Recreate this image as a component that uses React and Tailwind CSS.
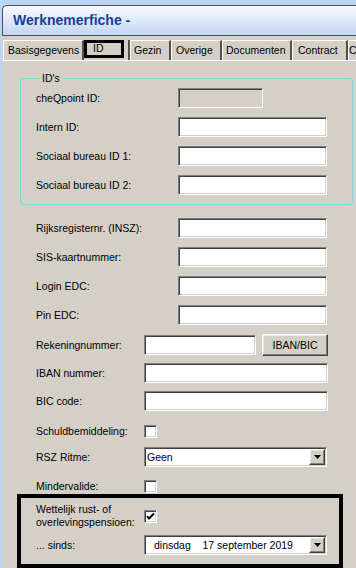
import React from "react";

const sunken =
  "border border-t-[#808080] border-l-[#808080] border-b-white border-r-white shadow-[inset_1px_1px_0_#404040,inset_-1px_-1px_0_#d4d0c8]";
const raised =
  "border border-t-white border-l-white border-b-[#404040] border-r-[#404040] shadow-[inset_-1px_-1px_0_#808080,inset_1px_1px_0_#e8e6e1]";

function Input({ w = "w-[149px]", disabled = false }) {
  return (
    <div className={`h-[20px] ${w} ${sunken} ${disabled ? "bg-[#d4d0c8]" : "bg-white"}`} />
  );
}

function Checkbox({ checked = false }) {
  return (
    <div className={`w-[13px] h-[13px] bg-white ${sunken} flex items-center justify-center`}>
      {checked && (
        <svg width="9" height="9" viewBox="0 0 9 9">
          <path d="M1 4 L3 6.5 L8 1.5" stroke="#000" strokeWidth="2" fill="none" />
        </svg>
      )}
    </div>
  );
}

function DropBtn() {
  return (
    <div className={`w-[16px] h-[16px] bg-[#d4d0c8] ${raised} flex items-center justify-center`}>
      <svg width="7" height="4" viewBox="0 0 7 4">
        <path d="M0 0 H7 L3.5 4 Z" fill="#000" />
      </svg>
    </div>
  );
}

function Select({ children }) {
  return (
    <div className={`h-[20px] w-[183px] bg-white ${sunken} flex items-center justify-between pl-[2px] pr-[1px]`}>
      <div className="flex items-center">{children}</div>
      <DropBtn />
    </div>
  );
}

function Row({ label, mt, lw = "w-[142px]", h = "h-[20px]", children }) {
  return (
    <div className={`flex items-center ${h} ${mt}`}>
      <div className={`${lw} shrink-0`}>{label}</div>
      {children}
    </div>
  );
}

function Tab({ w, children, pl = "pl-[6px]" }) {
  return (
    <div
      className={`${w} h-[20px] shrink-0 border-t border-l border-white border-r-2 border-r-[#505050] flex items-center whitespace-nowrap ${pl}`}
    >
      {children}
    </div>
  );
}

export default function App() {
  return (
    <div className="w-[356px] h-[568px] overflow-hidden bg-[#bdd5f4] pt-[5px] text-[10.5px] text-black font-['Liberation_Sans',Arial,sans-serif] leading-[13px]">
      <div className="ml-[2px] h-[31px] border border-r-0 border-[#505050] rounded-tl-[5px] bg-gradient-to-b from-[#f8fbff] to-[#c3d5f1] flex items-center pl-[10px]">
        <span className="text-[14px] font-bold text-[#1c3d96]">Werknemerfiche -</span>
      </div>
      <div className="ml-[2px] h-[532px] bg-[#d4d0c8] pt-[4px]">
        <div className="flex h-[20px] pl-[1px] overflow-hidden">
          <Tab w="w-[81px]" pl="pl-[4px]">Basisgegevens</Tab>
          <div className="relative w-[46px] h-[20px] shrink-0 border-r-2 border-r-[#505050]">
            <div className="absolute left-0 top-0 w-[40px] h-[18px] border-[3px] border-black pl-[6px] leading-[11px]">
              ID
            </div>
          </div>
          <Tab w="w-[41px]" pl="pl-[3px]">Gezin</Tab>
          <Tab w="w-[51px]" pl="pl-[4px]">Overige</Tab>
          <Tab w="w-[70px]" pl="pl-[3px]">Documenten</Tab>
          <Tab w="w-[56px]" pl="pl-[5px]">Contract</Tab>
          <Tab w="w-[12px]" pl="pl-0">C</Tab>
        </div>
        <div className="border-t border-white pl-[18px] pt-[11px]">
          <fieldset className="w-[333px] border border-[#80d2e2] rounded-[3px] pl-[15px] pb-[9px]">
            <legend className="ml-[4px] px-[2px] leading-[13px]">ID's</legend>
            <div className="pt-[3px]">
              <Row label="cheQpoint ID:" mt="">
                <Input w="w-[85px]" disabled />
              </Row>
              <Row label="Intern ID:" mt="mt-[9px]">
                <Input />
              </Row>
              <Row label="Sociaal bureau ID 1:" mt="mt-[9px]">
                <Input />
              </Row>
              <Row label="Sociaal bureau ID 2:" mt="mt-[9px]">
                <Input />
              </Row>
            </div>
          </fieldset>
          <div className="pl-[16px]">
            <Row label="Rijksregisternr. (INSZ):" mt="mt-[13px]">
              <Input />
            </Row>
            <Row label="SIS-kaartnummer:" mt="mt-[9px]">
              <Input />
            </Row>
            <Row label="Login EDC:" mt="mt-[9px]">
              <Input />
            </Row>
            <Row label="Pin EDC:" mt="mt-[9px]">
              <Input />
            </Row>
            <Row label="Rekeningnummer:" mt="mt-[9px]" lw="w-[108px]" h="h-[22px]">
              <Input w="w-[112px]" />
              <div className={`ml-[6px] w-[66px] h-[22px] bg-[#d4d0c8] ${raised} flex items-center justify-center`}>
                IBAN/BIC
              </div>
            </Row>
            <Row label="IBAN nummer:" mt="mt-[7px]" lw="w-[108px]">
              <Input w="w-[184px]" />
            </Row>
            <Row label="BIC code:" mt="mt-[8px]" lw="w-[108px]">
              <Input w="w-[184px]" />
            </Row>
            <Row label="Schuldbemiddeling:" mt="mt-[10px]" lw="w-[108px]">
              <Checkbox />
            </Row>
            <Row label="RSZ Ritme:" mt="mt-[6px]" lw="w-[108px]">
              <Select>
                <span>Geen</span>
              </Select>
            </Row>
            <Row label="Mindervalide:" mt="mt-[11px]" lw="w-[108px]" h="h-[16px]">
              <Checkbox />
            </Row>
          </div>
          <div className="-ml-[3px] w-[326px] border-[4px] border-black pl-[15px] pt-[5px] pb-[9px]">
            <div className="flex items-center">
              <div className="w-[108px] shrink-0">
                Wettelijk rust- of
                <br />
                overlevingspensioen:
              </div>
              <Checkbox checked />
            </div>
            <Row label="... sinds:" mt="mt-[6px]" lw="w-[108px]">
              <Select>
                <span className="ml-[7px] whitespace-pre">dinsdag    17 september 2019</span>
              </Select>
            </Row>
          </div>
        </div>
      </div>
    </div>
  );
}
